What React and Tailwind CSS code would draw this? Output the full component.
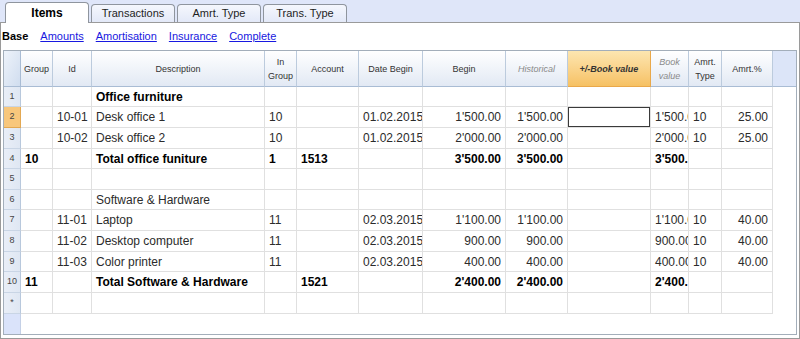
const columns = [
  { key: 'group', label: ['Group'] },
  { key: 'id', label: ['Id'] },
  { key: 'desc', label: ['Description'] },
  { key: 'ingroup', label: ['In', 'Group'] },
  { key: 'account', label: ['Account'] },
  { key: 'date', label: ['Date Begin'] },
  { key: 'begin', label: ['Begin'], right: true },
  { key: 'hist', label: ['Historical'], right: true, dim: true },
  { key: 'delta', label: ['+/-Book value'], orange: true },
  { key: 'book', label: ['Book', 'value'], dim: true },
  { key: 'type', label: ['Amrt.', 'Type'] },
  { key: 'pct', label: ['Amrt.%'], right: true },
];

const rows = [
  { n: '1', h: 'h-[20px]', bold: true, desc: 'Office furniture' },
  { n: '2', active: true, id: '10-01', desc: 'Desk office 1', ingroup: '10', date: '01.02.2015', begin: "1'500.00", hist: "1'500.00", book: "1'500.00", type: '10', pct: '25.00' },
  { n: '3', id: '10-02', desc: 'Desk office 2', ingroup: '10', date: '01.02.2015', begin: "2'000.00", hist: "2'000.00", book: "2'000.00", type: '10', pct: '25.00' },
  { n: '4', bold: true, group: '10', desc: 'Total office funiture', ingroup: '1', account: '1513', begin: "3'500.00", hist: "3'500.00", book: "3'500.00" },
  { n: '5' },
  { n: '6', desc: 'Software & Hardware' },
  { n: '7', id: '11-01', desc: 'Laptop', ingroup: '11', date: '02.03.2015', begin: "1'100.00", hist: "1'100.00", book: "1'100.00", type: '10', pct: '40.00' },
  { n: '8', id: '11-02', desc: 'Desktop computer', ingroup: '11', date: '02.03.2015', begin: '900.00', hist: '900.00', book: '900.00', type: '10', pct: '40.00' },
  { n: '9', id: '11-03', desc: 'Color printer', ingroup: '11', date: '02.03.2015', begin: '400.00', hist: '400.00', book: '400.00', type: '10', pct: '40.00' },
  { n: '10', bold: true, group: '11', desc: 'Total Software & Hardware', account: '1521', begin: "2'400.00", hist: "2'400.00", book: "2'400.00" },
  { n: '*' },
];

function Tab({ label, active }) {
  if (active) {
    return (
      <div className="relative z-10 -mb-px flex h-[21px] w-[84px] items-center justify-center rounded-t-[4px] border border-b-0 border-[#8f959e] bg-white text-[12px] font-bold text-black">
        {label}
      </div>
    );
  }
  return (
    <div className="flex h-[18px] w-[84px] items-center justify-center rounded-t-[4px] border border-b-0 border-[#8f959e] bg-gradient-to-b from-[#f5f7fd] to-[#e3e9f8] text-[11px] text-[#1e1e1e]">
      {label}
    </div>
  );
}

function HeaderCell({ col }) {
  let cls = 'border-r border-b border-r-[#bccbdd] border-b-[#a9bcd4] bg-gradient-to-b from-white to-[#e2e9f4] text-[#333]';
  if (col.orange) cls = 'border-r border-b border-[#e9a84a] bg-gradient-to-b from-[#fde6b0] to-[#f6c163] font-bold italic text-[#333]';
  else if (col.dim) cls += ' italic text-[#8a8a8a]';
  return (
    <div className={`flex flex-col items-center justify-center text-center text-[9px] leading-[14px] ${cls}`}>
      {col.label.map((l) => (
        <span key={l} className={col.dim ? 'text-[#8a8a8a]' : ''}>{l}</span>
      ))}
    </div>
  );
}

function DataCell({ col, row }) {
  const v = row[col.key];
  const selected = row.active && col.key === 'delta';
  return (
    <div
      className={`flex items-center overflow-hidden whitespace-nowrap border-b border-r border-[#e0e0e0] px-[4px] text-[12px] ${
        col.right ? 'justify-end' : 'justify-start'
      } ${row.bold ? 'font-bold text-black' : 'text-[#2b2b2b]'} ${selected ? 'shadow-[inset_0_0_0_1px_#3a3a3a]' : ''}`}
    >
      {v}
    </div>
  );
}

export default function App() {
  return (
    <div className="h-[339px] w-[800px] overflow-hidden bg-[#dfe6f9] font-['Liberation_Sans',Arial,sans-serif]">
      <div className="flex h-[22px] items-end gap-[2px] pl-[5px]">
        <Tab label="Items" active />
        <Tab label="Transactions" />
        <Tab label="Amrt. Type" />
        <Tab label="Trans. Type" />
      </div>

      <div className="flex h-[317px] flex-col border border-[#9a9a9a] bg-white">
        <div className="flex h-[27px] items-center gap-[12px] pl-[1px] text-[11px]">
          <span className="font-bold text-black">Base</span>
          {['Amounts', 'Amortisation', 'Insurance', 'Complete'].map((l) => (
            <span key={l} className="text-[#1818e0] underline">{l}</span>
          ))}
        </div>

        <div className="mx-[2px] grid h-[285px] grid-cols-[17px_32px_39px_173px_32px_62px_64px_83px_62px_83px_38px_33px_51px_1fr] grid-rows-[36px_20px_21px_21px_20px_21px_20px_21px_21px_20px_21px_21px_1fr] border border-[#a3aeba]">
          <div className="border-b border-r border-b-[#a9bcd4] border-r-[#a9bcd4] bg-gradient-to-br from-[#eef3fa] to-[#d0ddef]" />
          {columns.map((c) => (
            <HeaderCell key={c.key} col={c} />
          ))}
          <div className="border-b border-[#a9bcd4] bg-[#dce5f8]" />

          {rows.map((r) => (
            <div key={r.n} className="contents">
              <div
                className={`flex items-center justify-center border-b border-r text-[9px] text-[#444] ${
                  r.active
                    ? 'border-[#e3a852] bg-[#f8c77c]'
                    : 'border-b-[#c9d5e5] border-r-[#b8c8dc] bg-gradient-to-r from-[#e9eef7] to-[#dfe7f3]'
                }`}
              >
                {r.n}
              </div>
              {columns.map((c) => (
                <DataCell key={c.key} col={c} row={r} />
              ))}
              <div className="bg-white" />
            </div>
          ))}

          <div className="border-r border-[#c4d0e6] bg-[#dae3fa]" />
          <div className="col-span-13 bg-white" />
        </div>
      </div>
    </div>
  );
}
